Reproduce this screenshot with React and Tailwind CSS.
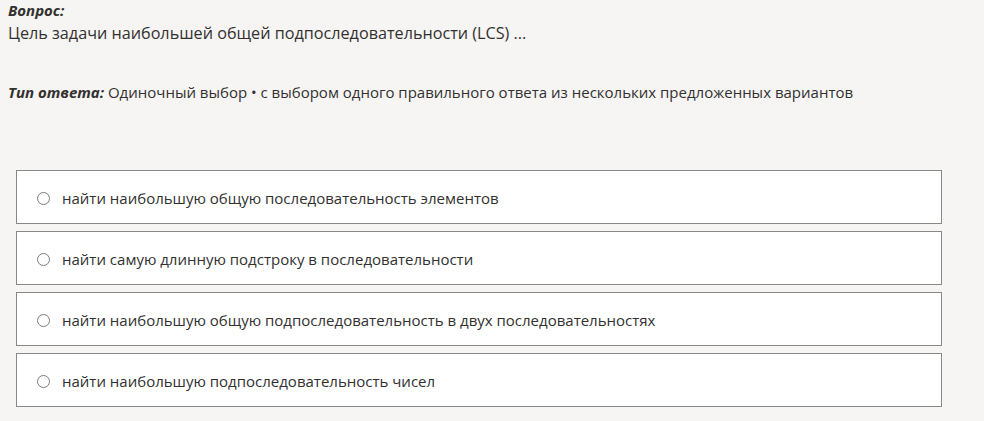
import React, { useState } from "react";

const options = [
  "найти наибольшую общую последовательность элементов",
  "найти самую длинную подстроку в последовательности",
  "найти наибольшую общую подпоследовательность в двух последовательностях",
  "найти наибольшую подпоследовательность чисел",
];

const App = () => {
  const [selected, setSelected] = useState(null);

  return (
    <div
      className="min-h-[421px] w-full bg-[#f6f5f3] text-[#323130] pt-[1px]"
      style={{ fontFamily: '"Open Sans", "Noto Sans", sans-serif' }}
    >
      <div className="pl-[8px]">
        <div className="text-[15px] leading-[18px] font-bold italic">Вопрос:</div>
        <div className="mt-[3px] text-[16.2px] leading-[22px]">
          Цель задачи наибольшей общей подпоследовательности (LCS) ...
        </div>
        <div className="mt-[37px] text-[15px] leading-[22px]">
          <span className="font-bold italic">Тип ответа:</span> Одиночный выбор • с выбором одного правильного
          ответа из нескольких предложенных вариантов
        </div>
      </div>

      <div className="mt-[67px] ml-[16px] w-[926px] flex flex-col gap-[7px]">
        {options.map((text, i) => (
          <label
            key={i}
            className="h-[54px] flex items-center bg-white border border-[#8a8886] pl-[20px] pt-[3px] cursor-pointer"
            onClick={() => setSelected(i)}
          >
            <span className="w-[13px] h-[13px] rounded-full border border-[#7a7a7a] flex items-center justify-center">
              {selected === i && <span className="w-[7px] h-[7px] rounded-full bg-[#323130]" />}
            </span>
            <span className="ml-[12px] text-[15px]">{text}</span>
          </label>
        ))}
      </div>
    </div>
  );
};

export default App;
